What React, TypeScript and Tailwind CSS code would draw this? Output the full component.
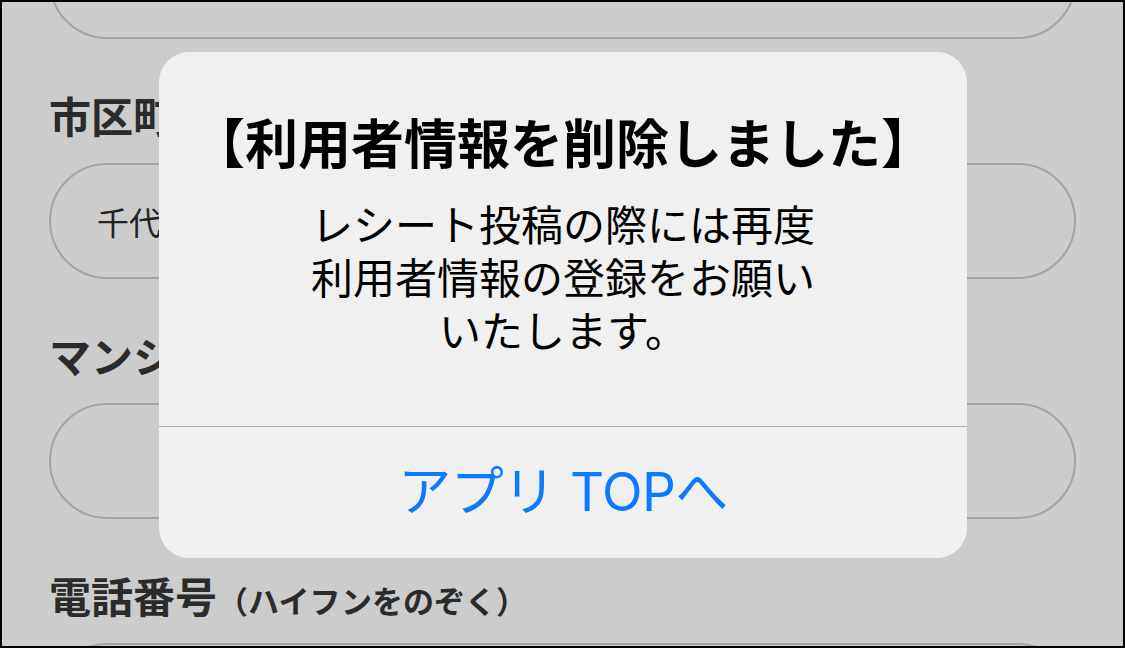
import React from 'react';

const jp = "font-['Noto_Sans_CJK_JP','Noto_Sans',sans-serif]";

const Field: React.FC<{ value?: string }> = ({ value }) => (
  <div className="h-[116px] shrink-0 rounded-full border-[2.5px] border-[#a3a3a3] flex items-center pl-[46px]">
    {value && <span className="text-[32px] text-[#222]">{value}</span>}
  </div>
);

const Label: React.FC<{ children: React.ReactNode }> = ({ children }) => (
  <div className="mt-[51px] mb-[23px] h-[50px] leading-[50px] text-[42px] font-bold text-[#2b2b2b] whitespace-nowrap">
    {children}
  </div>
);

export default function App() {
  return (
    <div className={`relative w-[1125px] h-[648px] overflow-hidden bg-[#cccccc] border-2 border-black ${jp}`}>
      {/* form behind the alert */}
      <div className="flex flex-col px-[47px] -mt-[79px]">
        <Field />
        <Label>市区町村</Label>
        <Field value="千代田区" />
        <Label>マンション・建物名</Label>
        <Field />
        <Label>
          電話番号<span className="text-[31px]">（ハイフンをのぞく）</span>
        </Label>
        <Field />
      </div>

      {/* alert */}
      <div className="absolute left-[157px] top-[50px] w-[808px] rounded-[30px] bg-[#f0f0f0] flex flex-col overflow-hidden">
        <div className="pt-[59px] pb-[71px] flex flex-col items-center text-black">
          <div className="text-[53px] leading-[60px] font-bold whitespace-nowrap">【利用者情報を削除しました】</div>
          <div className="mt-[25px] text-[42px] leading-[53px] text-center">
            レシート投稿の際には再度
            <br />
            利用者情報の登録をお願い
            <br />
            いたします。
          </div>
        </div>
        <div className="h-px bg-[#adadad]" />
        <button className="h-[131px] flex items-center justify-center text-[53px] tracking-[-0.01em] text-[#0a7aff] font-['Inter','Noto_Sans_CJK_JP',sans-serif]">
          アプリ TOPへ
        </button>
      </div>
    </div>
  );
}
